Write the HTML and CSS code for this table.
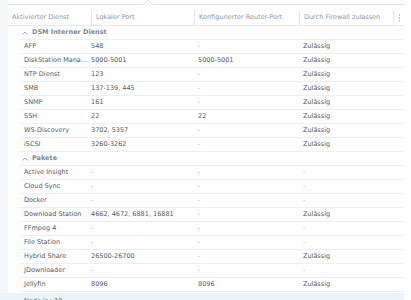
FILE: index.html
```html
<!DOCTYPE html>
<html lang="de">
<head>
<meta charset="utf-8">
<link rel="stylesheet" href="styles.css">
</head>
<body>
<div class="page">
  <div class="gutter"></div>
  <div class="panel">
    <div class="topline">
      <svg class="notch" width="10" height="5" viewBox="0 0 10 5"><polyline points="0,4.5 5,0.5 10,4.5" fill="#fff" stroke="#e1e5e9" stroke-width="1"/></svg>
    </div>
    <div class="grid head">
      <div class="hc">Aktivierter Dienst</div>
      <div class="hc div">Lokaler Port</div>
      <div class="hc div">Konfigurierter Router-Port</div>
      <div class="hc div">Durch Firewall zulassen</div>
      <div class="hc div menu"><svg width="3" height="8" viewBox="0 0 3 8"><circle cx="1.5" cy="1" r="0.7" fill="#9aa4ad"/><circle cx="1.5" cy="4" r="0.7" fill="#9aa4ad"/><circle cx="1.5" cy="7" r="0.7" fill="#9aa4ad"/></svg></div>
    </div>

    <div class="group"><svg class="caret" width="6" height="4" viewBox="0 0 6 4"><polyline points="0.5,3.5 3,1 5.5,3.5" fill="none" stroke="#9aa4ad" stroke-width="0.9"/></svg>DSM Interner Dienst</div>
    <div class="grid row"><div>AFP</div><div>548</div><div class="dash">-</div><div>Zulässig</div></div>
    <div class="grid row"><div>DiskStation Mana...</div><div>5000-5001</div><div>5000-5001</div><div>Zulässig</div></div>
    <div class="grid row"><div>NTP Dienst</div><div>123</div><div class="dash">-</div><div>Zulässig</div></div>
    <div class="grid row"><div>SMB</div><div>137-139, 445</div><div class="dash">-</div><div>Zulässig</div></div>
    <div class="grid row"><div>SNMP</div><div>161</div><div class="dash">-</div><div>Zulässig</div></div>
    <div class="grid row"><div>SSH</div><div>22</div><div>22</div><div>Zulässig</div></div>
    <div class="grid row"><div>WS-Discovery</div><div>3702, 5357</div><div class="dash">-</div><div>Zulässig</div></div>
    <div class="grid row"><div>iSCSI</div><div>3260-3262</div><div class="dash">-</div><div>Zulässig</div></div>

    <div class="group"><svg class="caret" width="6" height="4" viewBox="0 0 6 4"><polyline points="0.5,3.5 3,1 5.5,3.5" fill="none" stroke="#9aa4ad" stroke-width="0.9"/></svg>Pakete</div>
    <div class="grid row"><div>Active Insight</div><div class="dash">-</div><div class="dash">-</div><div class="dash">-</div></div>
    <div class="grid row"><div>Cloud Sync</div><div class="dash">-</div><div class="dash">-</div><div class="dash">-</div></div>
    <div class="grid row"><div>Docker</div><div class="dash">-</div><div class="dash">-</div><div class="dash">-</div></div>
    <div class="grid row"><div>Download Station</div><div>4662, 4672, 6881, 16881</div><div class="dash">-</div><div>Zulässig</div></div>
    <div class="grid row"><div>FFmpeg 4</div><div class="dash">-</div><div class="dash">-</div><div class="dash">-</div></div>
    <div class="grid row"><div>File Station</div><div class="dash">-</div><div class="dash">-</div><div class="dash">-</div></div>
    <div class="grid row"><div>Hybrid Share</div><div>26500-26700</div><div class="dash">-</div><div>Zulässig</div></div>
    <div class="grid row"><div>JDownloader</div><div class="dash">-</div><div class="dash">-</div><div class="dash">-</div></div>
    <div class="grid row"><div>Jellyfin</div><div>8096</div><div>8096</div><div>Zulässig</div></div>
    <div class="grid row hover"><div>Node.js v18</div><div class="dash">-</div><div class="dash">-</div><div class="dash">-</div></div>
  </div>
</div>
</body>
</html>
```

FILE: styles.css
```css
* { box-sizing: border-box; }
html, body {
  margin: 0;
  padding: 0;
  background: #ffffff;
  overflow: hidden;
}
body {
  font-family: "DejaVu Sans", Verdana, sans-serif;
  font-size: 6.5px;
  color: #525c66;
}
.page {
  display: flex;
  height: 300px;
}
.gutter {
  width: 8px;
  background: #f4f6f8;
  flex: none;
}
.panel {
  flex: 1;
  margin-right: 7px;
  background: #fff;
}
.topline {
  height: 5px;
  border-bottom: 1px solid #e4e8ec;
  position: relative;
}
.notch {
  position: absolute;
  left: 135px;
  top: 0;
}
.grid {
  display: grid;
  grid-template-columns: 83px 103px 105px 94px 1fr;
}
.head {
  margin-top: 5px;
  height: 16px;
  border-bottom: 1px solid #e8ebee;
  color: #8c97a1;
}
.hc {
  padding-left: 4px;
  line-height: 15px;
  white-space: nowrap;
  overflow: hidden;
}
.hc.div {
  border-left: 1px solid #e6e9ec;
}
.menu {
  display: flex;
  align-items: center;
  padding-left: 4px;
}
.menu svg { display: block; }
.group {
  height: 14px;
  line-height: 13px;
  border-bottom: 1px solid #edf0f2;
  margin-left: 12px;
  color: #7d8892;
  font-weight: bold;
  display: flex;
  align-items: center;
  gap: 4px;
}
.group .caret { display: block; margin-left: 2px; }
.row {
  height: 14px;
  line-height: 13px;
  border-bottom: 1px solid #edf0f2;
  white-space: nowrap;
  margin-left: 12px;
  grid-template-columns: 67px 107px 105px 94px 1fr;
}
.row > div {
  padding-left: 4px;
  overflow: hidden;
}
.dash { color: #a3acb4; }
.hover {
  background: #ebf3fc;
  margin-left: -8px;
  padding-left: 20px;
  margin-top: 1px;
  line-height: 16px;
}
```
